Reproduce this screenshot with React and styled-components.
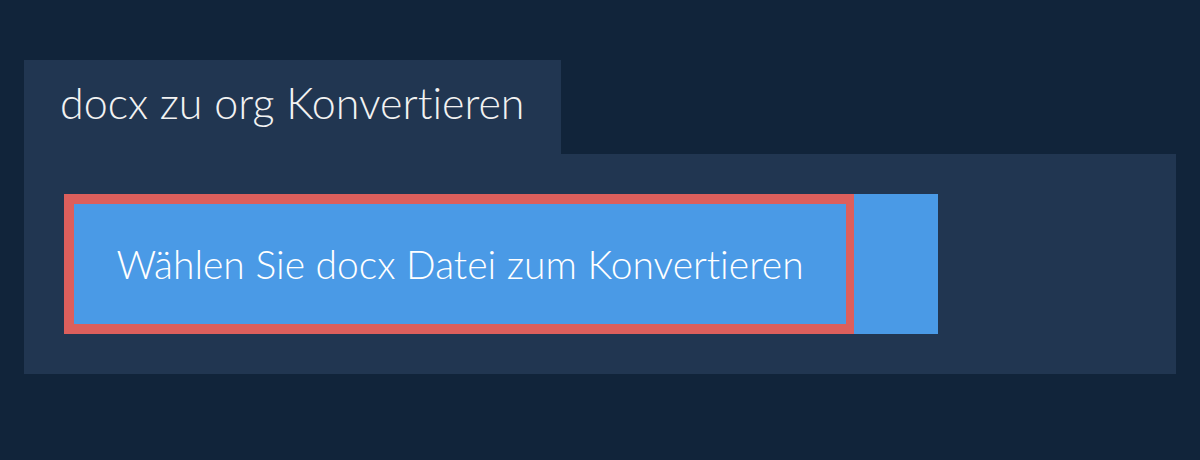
import styled, { createGlobalStyle } from "styled-components";

const GlobalStyle = createGlobalStyle`
  html, body {
    margin: 0;
    padding: 0;
    background: #11243a;
  }
  body {
    font-family: Lato, "Open Sans", sans-serif;
    font-variant-ligatures: none;
  }
`;

const Page = styled.div`
  width: 1200px;
  height: 460px;
  box-sizing: border-box;
  padding: 60px 24px 0;
  background: #11243a;
`;

const Tab = styled.h1`
  display: inline-block;
  margin: 0;
  padding: 0 36px;
  height: 94px;
  line-height: 86px;
  background: #213651;
  color: #f2f2f2;
  font-size: 43px;
  font-weight: 300;
  font-variant-ligatures: none;
`;

const Panel = styled.div`
  background: #213651;
  padding: 40px;
  display: flex;
`;

const Picker = styled.div`
  display: flex;
  width: 874px;
  height: 140px;
  background: #4a9ae6;
`;

const FileButton = styled.button`
  box-sizing: border-box;
  width: 790px;
  height: 140px;
  border: solid #dc5f5c;
  border-width: 10px 8px 10px 10px;
  background: #4a9ae6;
  color: #ffffff;
  font-family: Lato, "Open Sans", sans-serif;
  font-size: 39px;
  font-weight: 300;
  font-variant-ligatures: none;
  padding: 0;
  cursor: pointer;
`;

export default function App() {
  return (
    <>
      <GlobalStyle />
      <Page>
        <Tab>docx zu org Konvertieren</Tab>
        <Panel>
          <Picker>
            <FileButton>Wählen Sie docx Datei zum Konvertieren</FileButton>
          </Picker>
        </Panel>
      </Page>
    </>
  );
}
